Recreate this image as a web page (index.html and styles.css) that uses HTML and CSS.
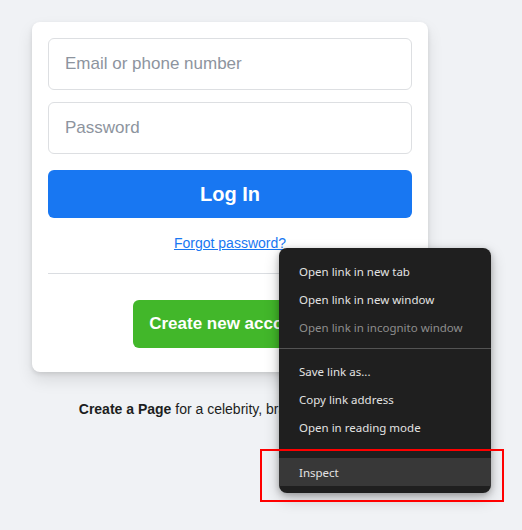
FILE: index.html
```html
<!DOCTYPE html>
<html>
<head>
<meta charset="utf-8">
<link rel="stylesheet" href="styles.css">
</head>
<body>
<div class="page">
  <div class="column">
    <div class="card">
      <input class="field" type="text" placeholder="Email or phone number">
      <input class="field" type="password" placeholder="Password">
      <button class="login">Log In</button>
      <div class="forgot"><a href="#">Forgot password?</a></div>
      <div class="divider"></div>
      <div class="create-wrap"><button class="create">Create new account</button></div>
    </div>
    <p class="pages-msg"><b>Create a Page</b> for a celebrity, brand or business.</p>
  </div>
</div>

<div class="menu">
  <div class="item">Open link in new tab</div>
  <div class="item">Open link in new window</div>
  <div class="item disabled">Open link in incognito window</div>
  <div class="sep"></div>
  <div class="item">Save link as...</div>
  <div class="item">Copy link address</div>
  <div class="item">Open in reading mode</div>
  <div class="gap"></div>
  <div class="item active">Inspect</div>
</div>
<div class="highlight"></div>
</body>
</html>
```

FILE: styles.css
```css
html, body {
  margin: 0;
  padding: 0;
}
body {
  background: #f0f2f5;
  font-family: "Liberation Sans", Arial, sans-serif;
  color: #1c1e21;
  width: 522px;
  height: 530px;
  overflow: hidden;
  position: relative;
}
.page {
  padding: 22px 0 0 32px;
}
.column {
  width: 396px;
}
.card {
  background: #fff;
  border-radius: 8px;
  box-shadow: 0 2px 4px rgba(0,0,0,.1), 0 8px 16px rgba(0,0,0,.1);
  padding: 16px 16px 24px;
  display: flex;
  flex-direction: column;
}
.field {
  box-sizing: border-box;
  width: 364px;
  height: 52px;
  border: 1px solid #dddfe2;
  border-radius: 6px;
  padding: 14px 16px;
  font-family: "Liberation Sans", Arial, sans-serif;
  font-size: 17px;
  color: #1d2129;
  outline: none;
  margin: 0 0 12px;
  background: #fff;
}
.field::placeholder {
  color: #8d949e;
}
.login {
  margin-top: 4px;
  height: 48px;
  border: none;
  border-radius: 6px;
  background: #1877f2;
  color: #fff;
  font-family: "Liberation Sans", Arial, sans-serif;
  font-size: 20px;
  font-weight: bold;
  line-height: 48px;
  padding: 0 16px;
}
.forgot {
  margin-top: 16px;
  text-align: center;
  font-size: 14px;
  line-height: 18px;
}
.forgot a {
  color: #1877f2;
  text-decoration: underline;
}
.divider {
  margin-top: 21px;
  height: 1px;
  background: #dadde1;
}
.create-wrap {
  margin-top: 26px;
  display: flex;
  justify-content: center;
}
.create {
  height: 48px;
  border: none;
  border-radius: 6px;
  background: #42b72a;
  color: #fff;
  font-family: "Liberation Sans", Arial, sans-serif;
  font-size: 17px;
  font-weight: bold;
  padding: 0 17px 0 16px;
  white-space: nowrap;
}
.pages-msg {
  margin: 28px 0 0;
  text-align: center;
  font-size: 14px;
  line-height: 18px;
  color: #1c1e21;
}
.menu {
  position: absolute;
  left: 279px;
  top: 248px;
  width: 212px;
  box-sizing: border-box;
  background: #1f1f1f;
  border-radius: 8px;
  padding: 9px 0 7px;
  box-shadow: 0 2px 6px rgba(0,0,0,.25), 0 6px 16px rgba(0,0,0,.2);
  font-family: "Noto Sans", "Open Sans", sans-serif;
  font-size: 11.5px;
}
.item {
  box-sizing: border-box;
  height: 28px;
  line-height: 28px;
  padding: 1px 20px 0;
  color: #e3e3e3;
  white-space: nowrap;
}
.item.disabled {
  color: #8e8e8e;
}
.item.active {
  background: #383838;
}
.sep {
  height: 1px;
  background: #535353;
  margin: 7px 0 8px;
}
.gap {
  height: 17px;
}
.highlight {
  position: absolute;
  left: 260px;
  top: 449px;
  width: 244px;
  height: 53px;
  box-sizing: border-box;
  border: 2px solid #ff0000;
}
```
